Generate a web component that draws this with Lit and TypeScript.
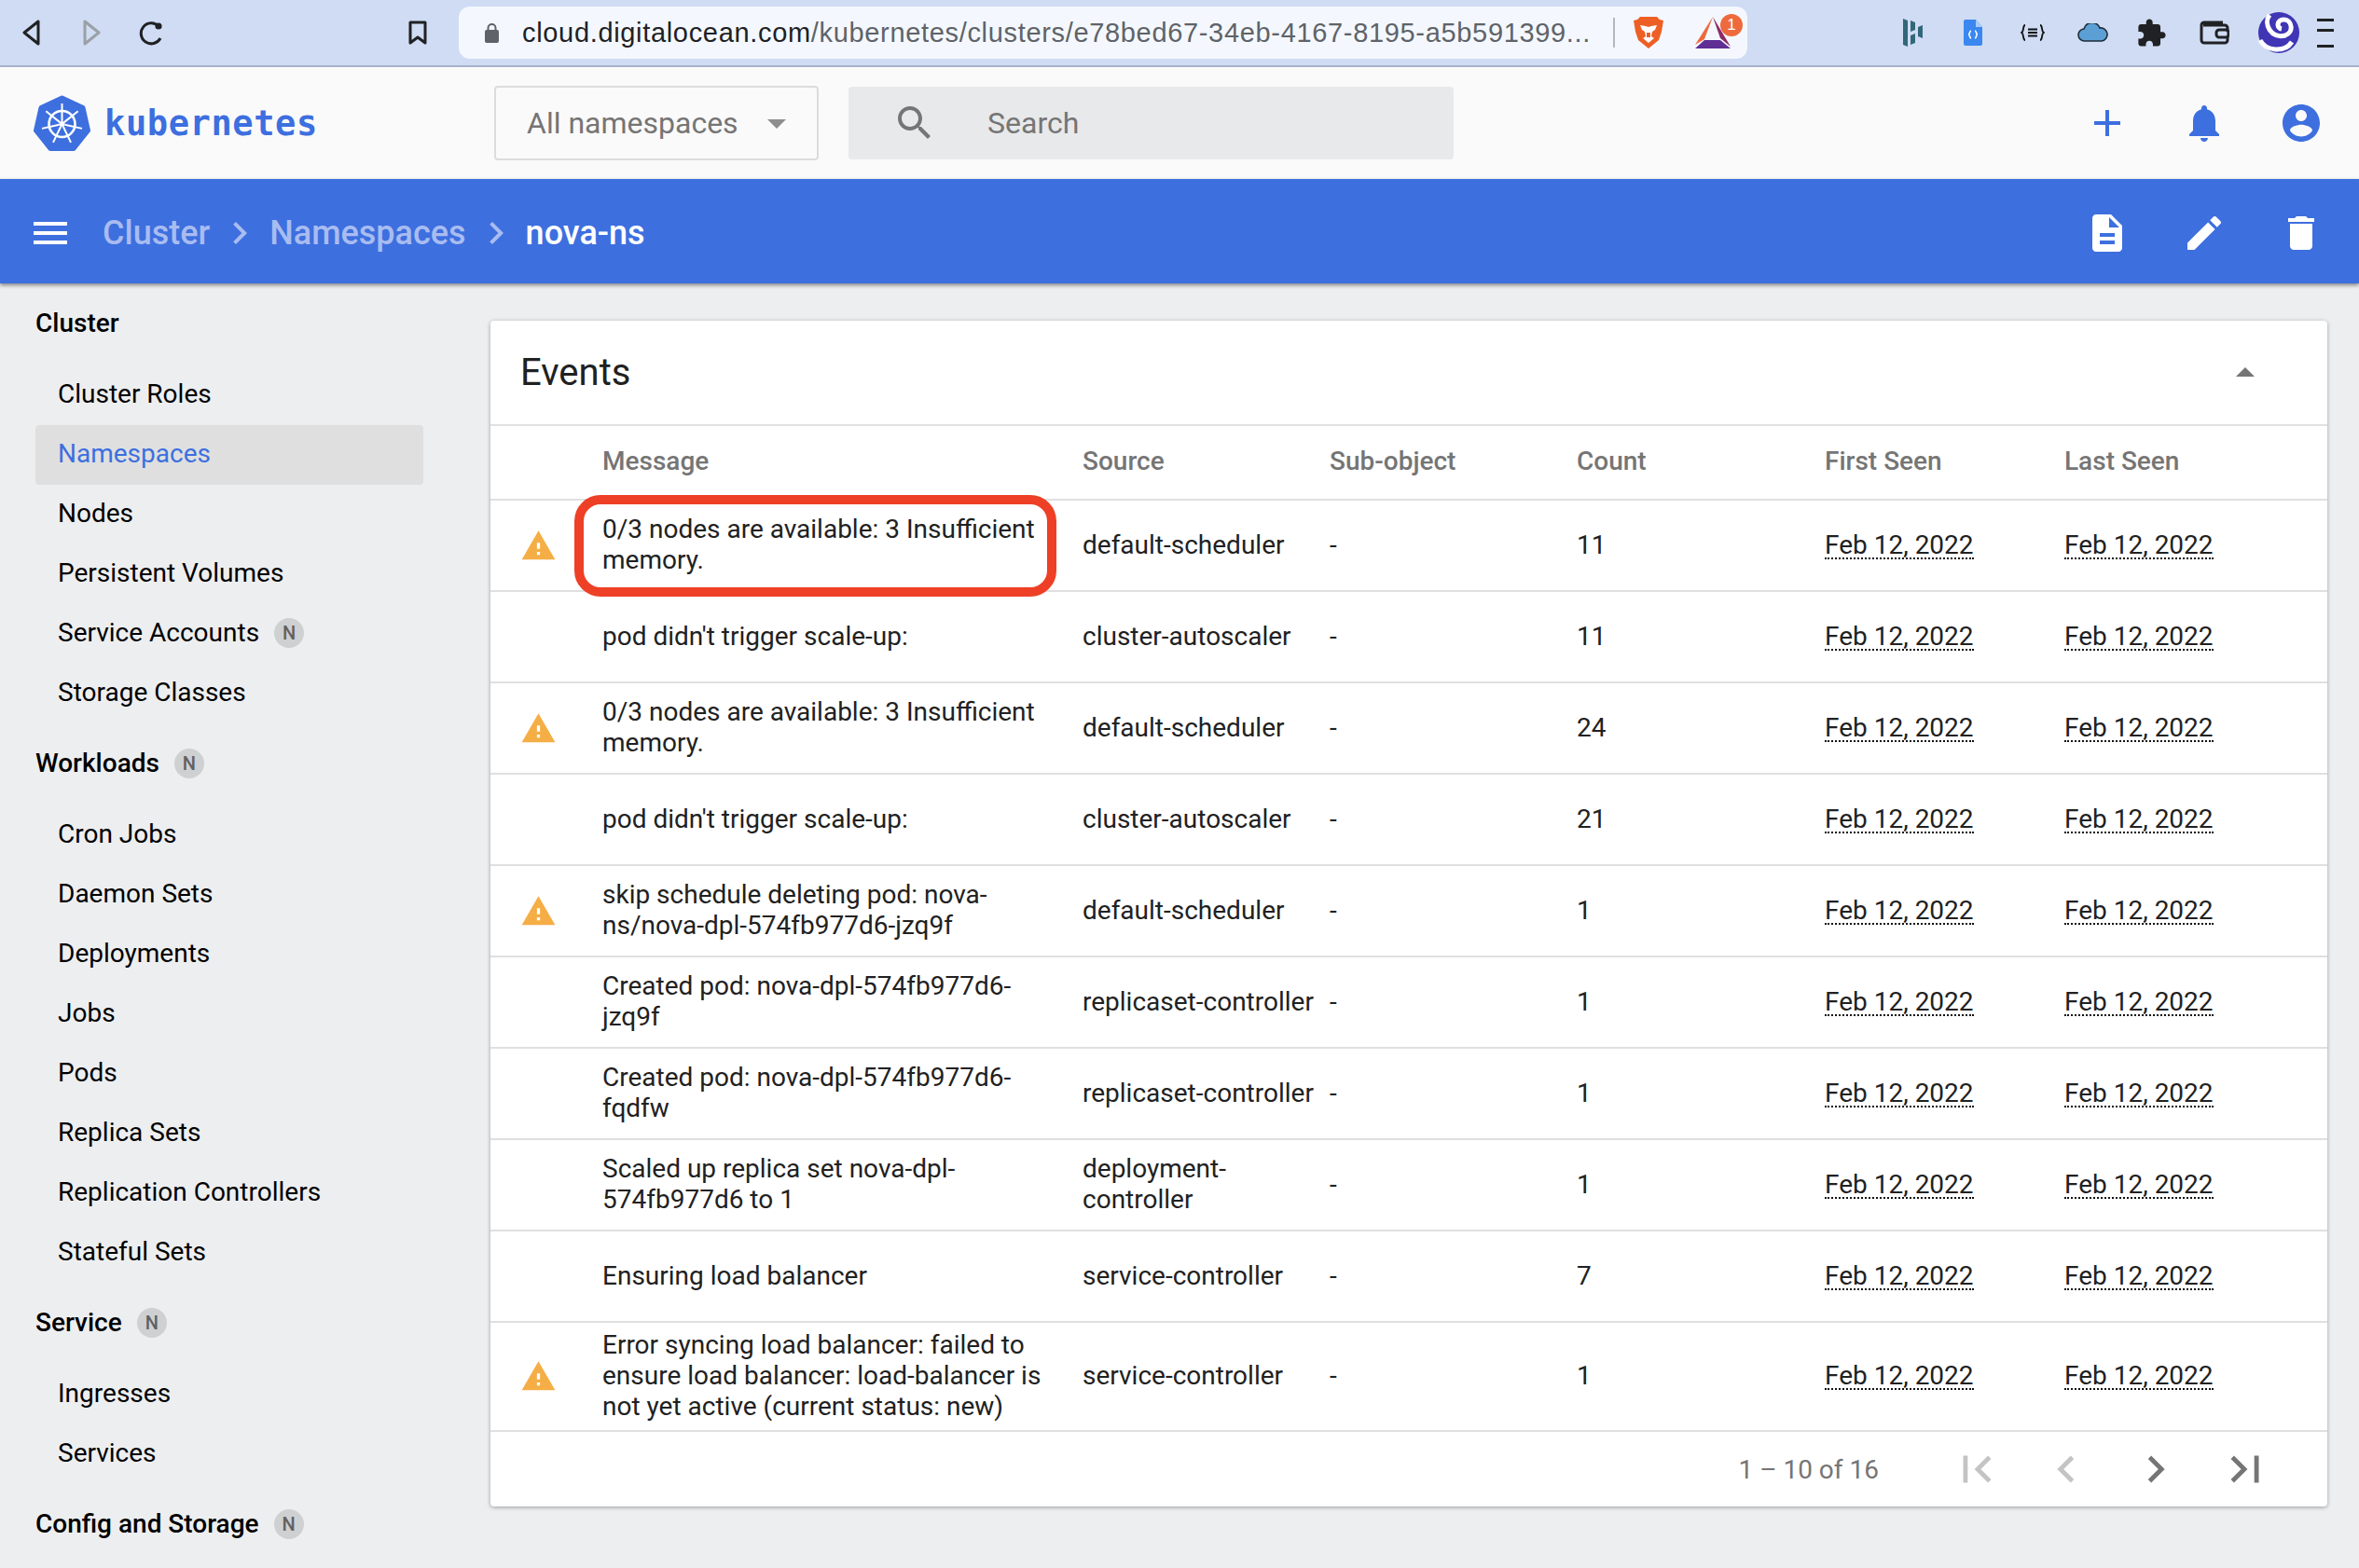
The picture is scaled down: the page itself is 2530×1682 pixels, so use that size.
import { LitElement, html, css, svg } from 'lit';
import { customElement } from 'lit/decorators.js';

const P = {
  plus: 'M19 13h-6v6h-2v-6H5v-2h6V5h2v6h6v2z',
  bell: 'M12 22c1.1 0 2-.9 2-2h-4c0 1.1.89 2 2 2zm6-6v-5c0-3.07-1.64-5.64-4.5-6.32V4c0-.83-.67-1.5-1.5-1.5s-1.5.67-1.5 1.5v.68C7.63 5.36 6 7.92 6 11v5l-2 2v1h16v-1l-2-2z',
  account: 'M12 2C6.48 2 2 6.48 2 12s4.48 10 10 10 10-4.48 10-10S17.52 2 12 2zm0 3c1.66 0 3 1.34 3 3s-1.34 3-3 3-3-1.34-3-3 1.34-3 3-3zm0 14.2c-2.5 0-4.71-1.28-6-3.22.03-1.99 4-3.08 6-3.08 1.99 0 5.97 1.09 6 3.08-1.29 1.94-3.5 3.22-6 3.22z',
  doc: 'M14 2H6c-1.1 0-1.99.9-1.99 2L4 20c0 1.1.89 2 1.99 2H18c1.1 0 2-.9 2-2V8l-6-6zm2 16H8v-2h8v2zm0-4H8v-2h8v2zm-3-5V3.5L18.5 9H13z',
  edit: 'M3 17.25V21h3.75L17.81 9.94l-3.75-3.75L3 17.25zM20.71 7.04c.39-.39.39-1.02 0-1.41l-2.34-2.34c-.39-.39-1.02-.39-1.41 0l-1.83 1.83 3.75 3.75 1.83-1.83z',
  trash: 'M6 19c0 1.1.9 2 2 2h8c1.1 0 2-.9 2-2V7H6v12zM19 4h-3.5l-1-1h-5l-1 1H5v2h14V4z',
  menu: 'M3 18h18v-2H3v2zm0-5h18v-2H3v2zm0-7v2h18V6H3z',
  search: 'M15.5 14h-.79l-.28-.27C15.41 12.59 16 11.11 16 9.5 16 5.91 13.09 3 9.5 3S3 5.91 3 9.5 5.91 16 9.5 16c1.61 0 3.09-.59 4.23-1.57l.27.28v.79l5 4.99L20.49 19l-4.99-5zm-6 0C7.01 14 5 11.99 5 9.5S7.01 5 9.5 5 14 7.01 14 9.5 11.99 14 9.5 14z',
  next: 'M10 6L8.59 7.41 13.17 12l-4.58 4.59L10 18l6-6z',
  prev: 'M15.41 7.41L14 6l-6 6 6 6 1.41-1.41L10.83 12z',
  first: 'M18.41 16.59L13.82 12l4.59-4.59L17 6l-6 6 6 6zM6 6h2v12H6z',
  last: 'M5.59 7.41L10.18 12l-4.59 4.59L7 18l6-6-6-6zM16 6h2v12h-2z',
  dropDown: 'M7 10l5 5 5-5z',
  dropUp: 'M7 14l5-5 5 5z',
  warn: 'M1 21h22L12 2 1 21zm12-3h-2v-2h2v2zm0-4h-2v-4h2v4z',
  puzzle: 'M20.5 11H19V7c0-1.1-.9-2-2-2h-4V3.5C13 2.12 11.88 1 10.5 1S8 2.12 8 3.5V5H4c-1.1 0-1.99.9-1.99 2v3.8H3.5c1.49 0 2.7 1.21 2.7 2.7s-1.21 2.7-2.7 2.7H2V20c0 1.1.9 2 2 2h3.8v-1.5c0-1.49 1.21-2.7 2.7-2.7 1.49 0 2.7 1.21 2.7 2.7V22H17c1.1 0 2-.9 2-2v-4h1.5c1.38 0 2.5-1.12 2.5-2.5S21.88 11 20.5 11z',
};

const icon = (d: string, cls = '') =>
  html`<svg class="icon ${cls}" viewBox="0 0 24 24"><path d=${d}></path></svg>`;

// 7 spokes of the helm wheel, each running from the hub out past the ring
const spokes = [0, 1, 2, 3, 4, 5, 6].map((i) => {
  const a = (i * 2 * Math.PI) / 7 - Math.PI / 2;
  return svg`<line x1=${30.5 + 3 * Math.cos(a)} y1=${31 + 3 * Math.sin(a)} x2=${30.5 + 22 * Math.cos(a)} y2=${31 + 22 * Math.sin(a)}></line>`;
});

const sections = [
  { title: 'Cluster', ns: false, items: [
    { name: 'Cluster Roles' },
    { name: 'Namespaces', active: true },
    { name: 'Nodes' },
    { name: 'Persistent Volumes' },
    { name: 'Service Accounts', ns: true },
    { name: 'Storage Classes' },
  ] },
  { title: 'Workloads', ns: true, items: [
    { name: 'Cron Jobs' }, { name: 'Daemon Sets' }, { name: 'Deployments' }, { name: 'Jobs' },
    { name: 'Pods' }, { name: 'Replica Sets' }, { name: 'Replication Controllers' }, { name: 'Stateful Sets' },
  ] },
  { title: 'Service', ns: true, items: [{ name: 'Ingresses' }, { name: 'Services' }] },
  { title: 'Config and Storage', ns: true, items: [] },
] as { title: string; ns: boolean; items: { name: string; ns?: boolean; active?: boolean }[] }[];

const events = [
  { warn: true, mark: true, msg: '0/3 nodes are available: 3 Insufficient memory.', src: 'default-scheduler', count: 11 },
  { msg: "pod didn't trigger scale-up:", src: 'cluster-autoscaler', count: 11 },
  { warn: true, msg: '0/3 nodes are available: 3 Insufficient memory.', src: 'default-scheduler', count: 24 },
  { msg: "pod didn't trigger scale-up:", src: 'cluster-autoscaler', count: 21 },
  { warn: true, msg: 'skip schedule deleting pod: nova-ns/nova-dpl-574fb977d6-jzq9f', src: 'default-scheduler', count: 1 },
  { msg: 'Created pod: nova-dpl-574fb977d6-jzq9f', src: 'replicaset-controller', count: 1 },
  { msg: 'Created pod: nova-dpl-574fb977d6-fqdfw', src: 'replicaset-controller', count: 1 },
  { msg: 'Scaled up replica set nova-dpl-574fb977d6 to 1', src: 'deployment-controller', count: 1 },
  { msg: 'Ensuring load balancer', src: 'service-controller', count: 7 },
  { warn: true, msg: 'Error syncing load balancer: failed to ensure load balancer: load-balancer is not yet active (current status: new)', src: 'service-controller', count: 1 },
] as { warn?: boolean; mark?: boolean; msg: string; src: string; count: number }[];

@customElement('app-root')
export class AppRoot extends LitElement {
  static styles = css`
    :host {
      display: block;
      height: 1682px;
      overflow: hidden;
      background: #edeef0;
      font-family: Roboto, sans-serif;
      font-size: 28px;
      color: #212121;
    }
    .icon { width: 48px; height: 48px; fill: currentColor; flex: none; display: block; }

    /* browser chrome */
    .chrome {
      height: 72px;
      box-sizing: border-box;
      display: flex;
      align-items: center;
      background: #cfdcf3;
      border-bottom: 2px solid #a8b3cc;
      padding-left: 2px;
      color: #202124;
    }
    .nav { width: 64px; height: 64px; display: flex; align-items: center; justify-content: center; flex: none; }
    .nav svg { display: block; }
    .bookmark { margin-left: 244px; margin-right: 34px; flex: none; }
    .bookmark svg { display: block; }
    .pill {
      width: 1382px;
      height: 56px;
      flex: none;
      display: flex;
      align-items: center;
      box-sizing: border-box;
      background: #f4f8fe;
      border-radius: 12px;
      padding-left: 28px;
      font-family: 'Liberation Sans', sans-serif;
      font-size: 29px;
    }
    .lock { margin-right: 25px; flex: none; }
    .url { color: #202124; white-space: nowrap; letter-spacing: 0.67px; width: 1143px; flex: none; }
    .url span { color: #5f6368; }
    .sep { width: 2px; height: 32px; background: #b5b8bd; margin-left: 27px; flex: none; }
    .brave { margin-left: 20px; flex: none; }
    .bat { position: relative; margin-left: 34px; flex: none; width: 38px; height: 34px; }
    .bat-badge {
      position: absolute;
      top: -3px;
      right: -13px;
      width: 24px;
      height: 24px;
      border-radius: 50%;
      background: #ee6a3c;
      color: #fff;
      font-size: 17px;
      line-height: 24px;
      text-align: center;
    }
    .exts { display: flex; margin-left: 146px; }
    .ext { width: 64px; height: 64px; display: flex; align-items: center; justify-content: center; flex: none; }
    .ext.wallet { margin-left: 3px; }
    .ext.swirl { margin-left: 5px; }
    .ext.kebab { width: 36px; }
    .kebab-lines { width: 18px; height: 25px; border-top: 3px solid #202124; border-bottom: 3px solid #202124; position: relative; }
    .kebab-lines::after { content: ''; position: absolute; left: 0; right: 0; top: 8px; height: 3px; background: #202124; }

    /* toolbar */
    .top {
      height: 120px;
      display: flex;
      align-items: center;
      background: #fafafa;
      padding-left: 36px;
    }
    .brand { display: flex; align-items: center; width: 494px; flex: none; color: #3d6fdf; }
    .brand svg { flex: none; display: block; }
    .brand-name {
      margin-left: 15px;
      font-family: 'DejaVu Sans Mono', monospace;
      font-size: 37px;
      font-weight: 700;
      letter-spacing: 0.6px;
    }
    .select {
      width: 348px;
      height: 80px;
      box-sizing: border-box;
      flex: none;
      display: flex;
      align-items: center;
      border: 2px solid #dcdcdc;
      border-radius: 4px;
      padding-left: 33px;
      font-size: 32px;
      color: #757575;
    }
    .select .icon { margin-left: 17px; color: #8e8e8e; }
    .search {
      width: 649px;
      height: 78px;
      flex: none;
      margin-left: 32px;
      display: flex;
      align-items: center;
      background: #e8e9eb;
      border-radius: 4px;
      padding-left: 47px;
      box-sizing: border-box;
      font-size: 32px;
      color: #757575;
    }
    .search span { margin-left: 54px; }
    .actions { margin-left: auto; display: flex; padding-right: 10px; color: #3d6fdf; }
    .act { width: 104px; display: flex; justify-content: center; }

    .bar {
      height: 112px;
      box-sizing: border-box;
      display: flex;
      align-items: center;
      background: #3d6fdf;
      color: #fff;
      padding: 4px 0 0 30px;
      box-shadow: 0 2px 4px rgba(0, 0, 0, 0.45);
      position: relative;
    }
    .crumbs { display: flex; align-items: center; margin-left: 32px; gap: 8px; font-size: 36px; font-weight: 500; color: #a9bcf0; }
    .crumbs b { font-weight: 500; color: #fff; }
    .bar .actions { color: #fff; }

    /* sidebar + content */
    .body { display: flex; align-items: flex-start; }
    .side { width: 492px; flex: none; padding-left: 38px; box-sizing: border-box; }
    .sec-title {
      height: 88px;
      box-sizing: border-box;
      padding-bottom: 3px;
      display: flex;
      align-items: center;
      gap: 16px;
      font-weight: 500;
      color: #000;
    }
    .sec-item {
      height: 64px;
      display: flex;
      align-items: center;
      gap: 16px;
      padding: 0 0 3px 24px;
      width: 416px;
      box-sizing: border-box;
      border-radius: 4px;
      color: #000;
    }
    .sec-item.on { background: #dfdfdf; color: #3d6fdf; }
    .badge {
      width: 32px;
      height: 32px;
      border-radius: 50%;
      background: #cfd0d2;
      color: #616161;
      font-size: 20px;
      font-weight: 500;
      line-height: 33px;
      text-align: center;
      flex: none;
    }

    .main { flex: 1; padding: 40px 34px 0 34px; min-width: 0; }
    .card {
      background: #fff;
      border-radius: 4px;
      box-shadow: 0 1px 4px rgba(0, 0, 0, 0.35);
    }
    .card-head {
      height: 113px;
      box-sizing: border-box;
      display: flex;
      align-items: center;
      justify-content: space-between;
      padding: 0 64px 0 32px;
      border-bottom: 2px solid #e0e0e0;
      font-size: 40px;
    }
    .card-head .icon { color: #757575; }
    .row {
      display: grid;
      grid-template-columns: 120px 515px 265px 265px 266px 257px 1fr;
      align-items: center;
      min-height: 98px;
      box-sizing: border-box;
      padding: 7px 0 9px;
      border-bottom: 2px solid #e0e0e0;
      line-height: 33px;
    }
    .row.head { min-height: 80px; padding: 6px 0 10px; color: #757575; font-weight: 500; }
    .warn { width: 39px; height: 39px; margin: 2px 0 0 32px; color: #f5ae46; }
    .msg { position: relative; padding-right: 16px; }
    .src { padding-right: 14px; }
    .mark {
      position: absolute;
      left: -30px;
      right: 28px;
      top: -20px;
      bottom: -23px;
      border: 10px solid #ee4026;
      border-radius: 28px;
      pointer-events: none;
    }
    .date { border-bottom: 2px dotted #111; display: inline-block; line-height: 27px; }
    .foot {
      height: 80px;
      display: flex;
      align-items: center;
      justify-content: flex-end;
      padding-right: 40px;
      color: #757575;
    }
    .range { margin-right: 57px; }
    .page { width: 96px; display: flex; justify-content: center; }
    .page .icon { width: 58px; height: 58px; }
    .page .off { color: #c4c4c4; }
  `;

  private chrome() {
    return html`
      <div class="chrome">
        <div class="nav"><svg width="22" height="28" viewBox="0 0 22 28"><path d="M18 2v24L3 14z" fill="none" stroke="#202124" stroke-width="3" stroke-linejoin="round"></path></svg></div>
        <div class="nav"><svg width="22" height="28" viewBox="0 0 22 28"><path d="M4 2v24l15-12z" fill="none" stroke="#9aa0a6" stroke-width="3" stroke-linejoin="round"></path></svg></div>
        <div class="nav"><svg width="28" height="28" viewBox="0 0 28 28"><path d="M22 7a11 11 0 1 0 2 13" fill="none" stroke="#202124" stroke-width="3"></path><circle cx="22" cy="7" r="3.6" fill="#202124"></circle></svg></div>
        <div class="bookmark"><svg width="20" height="26" viewBox="0 0 20 26"><path d="M2 2h16v22l-8-6-8 6z" fill="none" stroke="#202124" stroke-width="3" stroke-linejoin="round"></path></svg></div>
        <div class="pill">
          <svg class="lock" width="15" height="22" viewBox="0 0 15 22"><path d="M3.5 9V6a4 4 0 0 1 8 0v3" fill="none" stroke="#5f6368" stroke-width="2"></path><rect y="8" width="15" height="14" rx="2" fill="#5f6368"></rect></svg>
          <div class="url">cloud.digitalocean.com<span>/kubernetes/clusters/e78bed67-34eb-4167-8195-a5b591399...</span></div>
          <div class="sep"></div>
          <svg class="brave" width="32" height="36" viewBox="0 0 32 36">
            <path d="M7 1h18l3 3 4 1-2 12-3 9-11 9-11-9-3-9L0 5l4-1z" fill="#ee5f25"></path>
            <path d="M7 10l6 1 3 1 3-1 6-1-2 5-3 2-1 5 3 2-6 5-6-5 3-2-1-5-3-2z" fill="#fff"></path>
            <path d="M14 18h4v5h-4z" fill="#ee5f25"></path>
          </svg>
          <div class="bat">
            <svg width="38" height="34" viewBox="0 0 38 34">
              <path d="M19 0L0 30l10-6z" fill="#ee6a3c"></path>
              <path d="M19 0l19 32-11-9z" fill="#8e2a65"></path>
              <path d="M0 34h38L27 25H10z" fill="#5f2f94"></path>
              <path d="M19 10l-7 13h14z" fill="#f4f8fe"></path>
            </svg>
            <div class="bat-badge">1</div>
          </div>
        </div>
        <div class="exts">
          <div class="ext"><svg width="22" height="30" viewBox="0 0 22 30"><path d="M0 0l5 2v28l-5-2zM8 2l5 2v8l-5 2zM8 18l5-2v10l-5 2zM16 9l5-2v14l-5-2z" fill="#32677a"></path></svg></div>
          <div class="ext"><svg width="20" height="28" viewBox="0 0 20 28"><path d="M2 0h11l7 8v18a2 2 0 0 1-2 2H2a2 2 0 0 1-2-2V2a2 2 0 0 1 2-2z" fill="#3b87f0"></path><path d="M13 0l7 8h-7z" fill="#a9ccf9"></path><path d="M8 12c-2 0-1 4-3 4 2 0 1 4 3 4M12 12c2 0 1 4 3 4-2 0-1 4-3 4" fill="none" stroke="#fff" stroke-width="1.6"></path></svg></div>
          <div class="ext"><svg width="26" height="18" viewBox="0 0 26 18"><path d="M5 1C2 1 4 8 1 9c3 1 1 8 4 8M21 1c3 0 1 7 4 8-3 1-1 8-4 8" fill="none" stroke="#111" stroke-width="1.8"></path><path d="M8 5.5h10M8 9h10M8 12.5h10" stroke="#111" stroke-width="1.8"></path></svg></div>
          <div class="ext"><svg width="33" height="20" viewBox="0 0 33 20"><path d="M8 19a6.5 6.5 0 0 1-1-13 9 9 0 0 1 17-1 7 7 0 0 1 2 14z" fill="#5b9fd4" stroke="#1f2d3a" stroke-width="1.6"></path></svg></div>
          <div class="ext"><svg width="32" height="32" viewBox="1 0 23 23" fill="#202124"><path d=${P.puzzle}></path></svg></div>
          <div class="ext wallet"><svg width="32" height="26" viewBox="0 0 32 26"><path d="M4 5h23a3 3 0 0 1 3 3v13a3 3 0 0 1-3 3H5a3 3 0 0 1-3-3V5a3 3 0 0 1 3-3h20" fill="none" stroke="#202124" stroke-width="3"></path><rect x="18" y="10" width="13" height="8" rx="3" fill="#cfdcf3" stroke="#202124" stroke-width="3"></rect></svg></div>
          <div class="ext swirl"><svg width="44" height="44" viewBox="0 0 44 44"><circle cx="22" cy="22" r="22" fill="#3f35b5"></circle><path d="M2 30c6 12 26 14 34 2M12 3c-7 10 2 26 17 22 9-3 8-17-2-17-7 0-8 9-2 10" fill="none" stroke="#fff" stroke-width="5"></path></svg></div>
          <div class="ext kebab"><div class="kebab-lines"></div></div>
        </div>
      </div>`;
  }

  private logo() {
    return html`
      <svg width="61" height="60" viewBox="0 0 61 60">
        <path d="M30.5 3L53 13.5 58.5 38 43 57.5H18L2.5 38 8 13.5z" fill="#3d6fdf" stroke="#3d6fdf" stroke-width="5" stroke-linejoin="round"></path>
        <g stroke="#fff" stroke-width="2" fill="none">
          <circle cx="30.5" cy="31" r="14" stroke-width="2.6"></circle>
          ${spokes}
          <circle cx="30.5" cy="31" r="3" fill="#fff" stroke="none"></circle>
        </g>
      </svg>`;
  }

  private actions(list: string[]) {
    return html`<div class="actions">${list.map((d) => html`<div class="act">${icon(d)}</div>`)}</div>`;
  }

  private sidebar() {
    const badge = html`<span class="badge">N</span>`;
    return html`
      <nav class="side">
        ${sections.map((s) => html`
          <div class="sec-title">${s.title}${s.ns ? badge : ''}</div>
          ${s.items.map((it) => html`
            <div class="sec-item ${it.active ? 'on' : ''}">${it.name}${it.ns ? badge : ''}</div>`)}
        `)}
      </nav>`;
  }

  private table() {
    const d = 'Feb 12, 2022';
    return html`
      <section class="card">
        <div class="card-head">Events ${icon(P.dropUp)}</div>
        <div class="row head">
          <div></div><div>Message</div><div>Source</div><div>Sub-object</div><div>Count</div><div>First Seen</div><div>Last Seen</div>
        </div>
        ${events.map((e) => html`
          <div class="row">
            <div>${e.warn ? icon(P.warn, 'warn') : ''}</div>
            <div class="msg">${e.msg}${e.mark ? html`<div class="mark"></div>` : ''}</div>
            <div class="src">${e.src}</div>
            <div>-</div>
            <div>${e.count}</div>
            <div><span class="date">${d}</span></div>
            <div><span class="date">${d}</span></div>
          </div>`)}
        <div class="foot">
          <span class="range">1 – 10 of 16</span>
          <div class="page">${icon(P.first, 'off')}</div>
          <div class="page">${icon(P.prev, 'off')}</div>
          <div class="page">${icon(P.next)}</div>
          <div class="page">${icon(P.last)}</div>
        </div>
      </section>`;
  }

  render() {
    return html`
      ${this.chrome()}
      <header class="top">
        <div class="brand">${this.logo()}<span class="brand-name">kubernetes</span></div>
        <div class="select">All namespaces ${icon(P.dropDown)}</div>
        <div class="search">${icon(P.search)}<span>Search</span></div>
        ${this.actions([P.plus, P.bell, P.account])}
      </header>
      <div class="bar">
        ${icon(P.menu)}
        <div class="crumbs">Cluster ${icon(P.next)} Namespaces ${icon(P.next)} <b>nova-ns</b></div>
        ${this.actions([P.doc, P.edit, P.trash])}
      </div>
      <div class="body">
        ${this.sidebar()}
        <main class="main">${this.table()}</main>
      </div>`;
  }
}
